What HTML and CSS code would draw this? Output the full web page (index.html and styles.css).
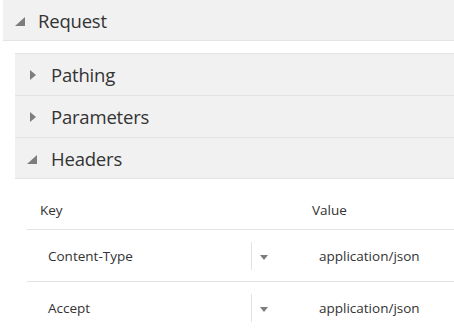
FILE: index.html
```html
<!DOCTYPE html>
<html>
<head>
<meta charset="utf-8">
<link rel="stylesheet" href="styles.css">
</head>
<body>
<div class="request">
  <div class="bar bar-top">
    <span class="tri-open"></span>
    <span class="title">Request</span>
  </div>
  <div class="request-body">
    <div class="panel">
      <div class="bar">
        <span class="tri-closed"></span>
        <span class="title">Pathing</span>
      </div>
    </div>
    <div class="panel">
      <div class="bar">
        <span class="tri-closed"></span>
        <span class="title">Parameters</span>
      </div>
    </div>
    <div class="panel">
      <div class="bar bar-last">
        <span class="tri-open"></span>
        <span class="title">Headers</span>
      </div>
      <div class="table">
        <div class="thead">
          <div class="th key-col">Key</div>
          <div class="th val-col">Value</div>
        </div>
        <div class="row">
          <div class="key-col combo">
            <span class="combo-text">Content-Type</span>
            <span class="combo-btn"><span class="arrow"></span></span>
          </div>
          <div class="val-col val">application/json</div>
        </div>
        <div class="row">
          <div class="key-col combo">
            <span class="combo-text">Accept</span>
            <span class="combo-btn"><span class="arrow"></span></span>
          </div>
          <div class="val-col val">application/json</div>
        </div>
      </div>
    </div>
  </div>
</div>
</body>
</html>
```
FILE: styles.css
```css
html, body {
  margin: 0;
  padding: 0;
  background: #ffffff;
}
body {
  font-family: "Open Sans", "Noto Sans", sans-serif;
  color: #333333;
  width: 454px;
  height: 333px;
  overflow: hidden;
}
.request {
  margin-left: 3px;
}
.bar {
  height: 41px;
  background: #f1f1f2;
  border-top: 1px solid #e3e3e4;
  display: flex;
  align-items: center;
}
.bar-top {
  height: 40px;
  border-top: none;
  border-bottom: 1px solid #e3e3e4;
  padding-left: 12px;
}
.bar-last {
  height: 40px;
  border-bottom: 1px solid #e3e3e4;
}
.request-body {
  padding: 12px 0 0 12px;
}
.panel .bar {
  padding-left: 15px;
}
.title {
  font-size: 18.5px;
  color: #333333;
  letter-spacing: -0.2px;
}
.tri-open {
  width: 0;
  height: 0;
  border-left: 10px solid transparent;
  border-bottom: 9px solid #7d7d7d;
  margin-right: 13px;
  margin-top: 2px;
}
.panel .tri-open {
  margin-left: -3px;
  margin-right: 14px;
}
.tri-closed {
  width: 0;
  height: 0;
  border-top: 5px solid transparent;
  border-bottom: 5px solid transparent;
  border-left: 6px solid #7d7d7d;
  margin-right: 15px;
}
.table {
  margin-left: 12px;
  padding-top: 12px;
}
.thead, .row {
  display: grid;
  grid-template-columns: 272px 1fr;
}
.thead {
  height: 38px;
  align-items: center;
  border-bottom: 1px solid #e3e3e4;
}
.th {
  font-size: 13.5px;
  color: #333;
  padding-left: 13px;
}
.row {
  height: 51px;
  align-items: center;
  border-bottom: 1px solid #e3e3e4;
  font-size: 13.5px;
}
.combo {
  display: flex;
  align-items: center;
  height: 28px;
  padding-left: 21px;
}
.combo-text {
  flex: 1;
}
.combo-btn {
  width: 48px;
  height: 28px;
  border-left: 1px solid #e3e3e4;
  display: flex;
  align-items: center;
  padding-left: 8px;
  box-sizing: border-box;
}
.arrow {
  width: 0;
  height: 0;
  border-left: 4.5px solid transparent;
  border-right: 4.5px solid transparent;
  border-top: 5px solid #7d7d7d;
  margin-top: 4px;
}
.val {
  padding-left: 20px;
}
```
